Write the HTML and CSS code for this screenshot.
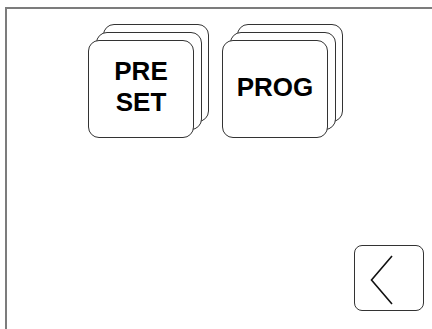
FILE: index.html
```html
<!DOCTYPE html>
<html lang="en">
<head>
    <meta charset="UTF-8">
    <meta name="viewport" content="width=device-width, initial-scale=1.0">
    <title>Panel</title>
    <link rel="stylesheet" href="styles.css">
</head>
<body>

    <div class="screen">
        <div class="stacks">
            <div class="stack">
                <div class="card back"></div>
                <div class="card middle"></div>
                <div class="card front">PRE<br>SET</div>
            </div>
            <div class="stack">
                <div class="card back"></div>
                <div class="card middle"></div>
                <div class="card front">PROG</div>
            </div>
        </div>

        <div class="footer">
            <div class="back-btn">
                <svg width="24" height="50" viewBox="0 0 24 50">
                    <polyline points="22,1 1.5,25 22,49" fill="none" stroke="#111" stroke-width="1.6"/>
                </svg>
            </div>
        </div>
    </div>

</body>
</html>
```

FILE: styles.css
```css
*
{
    box-sizing: border-box;
    padding: 0px;
    margin: 0px;
}

html, body
{
    width: 432px;
    height: 329px;
    overflow: hidden;
    background-color: #ffffff;
    font-family: "Liberation Sans", Arial, sans-serif;
}

.screen
{
    display: flex;
    flex-flow: column nowrap;
    justify-content: space-between;
    margin: 7px 0px 0px 5px;
    height: 322px;
    border-top: 2px solid #7c7c7c;
    border-left: 2px solid #7c7c7c;
}

.stacks
{
    display: flex;
    flex-flow: row nowrap;
    gap: 13px;
    padding: 15px 0px 0px 81px;
}

.stack
{
    display: grid;
}

.card
{
    grid-area: 1 / 1;
    width: 106px;
    height: 98px;
    border: 1px solid #333333;
    border-radius: 11px;
    background-color: #ffffff;
}

.card.back
{
    margin: 0px 0px 16px 15px;
}

.card.middle
{
    margin: 8px 0px 8px 8px;
}

.card.front
{
    margin: 16px 15px 0px 0px;
    display: flex;
    justify-content: center;
    align-items: center;
    font-size: 26px;
    font-weight: bold;
    line-height: 31px;
    text-align: center;
    color: #000000;
    padding-bottom: 4px;
}

.footer
{
    display: flex;
    justify-content: flex-end;
    padding: 0px 8px 18px 0px;
}

.back-btn
{
    display: flex;
    justify-content: center;
    align-items: center;
    width: 70px;
    height: 66px;
    padding: 4px 14px 0px 0px;
    border: 1px solid #333333;
    border-radius: 8px;
}
```
